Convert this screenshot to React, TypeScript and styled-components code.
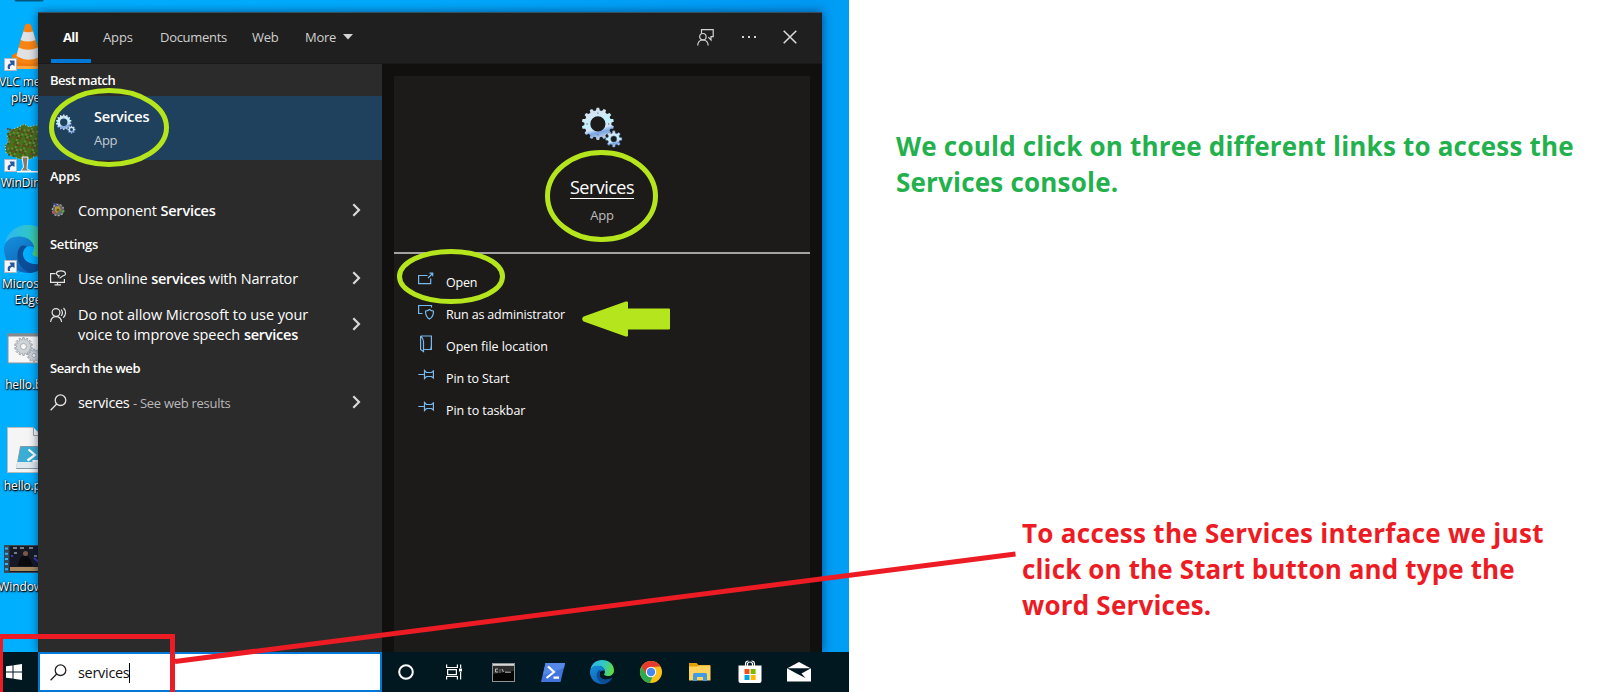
import React from "react";
import styled, { createGlobalStyle } from "styled-components";

const GlobalStyle = createGlobalStyle`
  * { box-sizing: border-box; }
  body { margin: 0; background: #fff; overflow: hidden; }
  #root { font-family: "Open Sans", "Noto Sans", sans-serif; }
`;

/* ---------- page ---------- */
const Page = styled.main`
  position: relative;
  display: flex;
  width: 1601px;
  height: 692px;
  overflow: hidden;
`;

const Desktop = styled.section`
  display: flex;
  flex-direction: column;
  width: 849px;
  height: 692px;
  background: linear-gradient(90deg, #00b0ff 0%, #00a8fb 50%, #0099f4 96%, #009ff5 100%);
`;

const Workspace = styled.div`
  display: flex;
  height: 652px;
`;

const IconColumn = styled.div`
  display: flex;
  flex-direction: column;
  width: 38px;
  height: 652px;
  padding-top: 22px;
  overflow: hidden;
`;

const Shortcut = styled.div`
  display: flex;
  flex-direction: column;
  align-items: center;
  flex: 0 0 101px;
  width: 76px;
  margin-left: -10px;
  svg { flex: none; }
`;

const ShortcutLabel = styled.div<{ $shift?: number }>`
  padding-left: ${(p) => p.$shift ?? 0}px;
  font-size: 12px;
  line-height: 15.5px;
  letter-spacing: -0.12px;
  text-align: center;
  white-space: nowrap;
  color: #fff;
  text-shadow: 1px 1px 1px #000, 0 1px 2px rgba(0, 0, 0, 0.9), 0 0 2px rgba(0, 0, 0, 0.6);
`;

/* ---------- search flyout ---------- */
const Flyout = styled.div`
  display: flex;
  flex-direction: column;
  width: 784px;
  height: 640px;
  margin-top: 12px;
  background: #11100e;
  box-shadow: 0 0 9px rgba(0, 20, 60, 0.6);
`;

const Header = styled.header`
  display: flex;
  align-items: stretch;
  justify-content: space-between;
  height: 52px;
  padding: 0 25px 0 13px;
  background: #1f1f1f;
  border-top: 1px solid #35505f;
  border-bottom: 1px solid #191919;
`;

const Tabs = styled.nav`
  display: flex;
`;

const Tab = styled.div<{ $active?: boolean; $width: number; $ls: number }>`
  display: flex;
  align-items: center;
  width: ${(p) => p.$width}px;
  padding: 0 0 2px 12px;
  font-size: 13px;
  font-weight: ${(p) => (p.$active ? 700 : 400)};
  letter-spacing: ${(p) => p.$ls}px;
  color: ${(p) => (p.$active ? "#fff" : "#cfcfcf")};
  box-shadow: ${(p) => (p.$active ? "inset 0 -4px #0078d7" : "none")};
  svg { margin-left: 7px; }
`;

const HeaderActions = styled.div`
  display: flex;
  align-items: center;
  gap: 26.5px;
  padding-bottom: 2px;
`;

const Body = styled.div`
  display: flex;
  height: 588px;
`;

const Results = styled.div`
  display: flex;
  flex-direction: column;
  width: 344px;
  background: #2b2b2b;
`;

const GroupTitle = styled.h2<{ $ls: number }>`
  margin: 0;
  height: 32px;
  padding-left: 12px;
  font-size: 13px;
  font-weight: 600;
  line-height: 32px;
  letter-spacing: ${(p) => p.$ls}px;
  color: #fff;
`;

const BestMatch = styled.div`
  display: flex;
  height: 64px;
  padding-left: 18px;
  background: #1f415d;
  svg { margin-top: 18px; }
`;

const BestMatchText = styled.div`
  display: flex;
  flex-direction: column;
  margin-left: 18px;
  padding-top: 9px;
`;

const BestName = styled.div`
  font-size: 14.5px;
  font-weight: 600;
  line-height: 24px;
  letter-spacing: -0.22px;
  color: #fff;
`;

const Kind = styled.div`
  font-size: 13px;
  line-height: 22px;
  letter-spacing: -0.3px;
  color: #c3ccd3;
`;

const ResultRow = styled.div<{ $h: number }>`
  display: flex;
  align-items: center;
  height: ${(p) => p.$h}px;
  padding: 0 21px 0 12px;
`;

const ResultIcon = styled.div<{ $lift?: number; $indent?: number }>`
  display: flex;
  width: 28px;
  padding-left: ${(p) => p.$indent ?? 0}px;
  padding-bottom: ${(p) => p.$lift ?? 0}px;
`;

const ResultText = styled.div<{ $ls: number }>`
  flex: 1;
  padding-top: 2px;
  font-size: 14.5px;
  line-height: 20px;
  letter-spacing: ${(p) => p.$ls}px;
  white-space: nowrap;
  color: #fff;
  b { font-weight: 600; letter-spacing: -0.25px; }
`;

const Hint = styled.span`
  font-size: 13px;
  letter-spacing: -0.28px;
  color: #b9b9b9;
`;

/* ---------- detail card ---------- */
const Detail = styled.div`
  width: 416px;
  margin: 12px 12px 0 12px;
  background: #1c1b19;
`;

const DetailHero = styled.div`
  display: flex;
  flex-direction: column;
  align-items: center;
  height: 178px;
  padding-top: 31px;
  border-bottom: 2px solid #a4a3a2;
`;

const DetailName = styled.div`
  height: 24px;
  margin-top: 27px;
  border-bottom: 1px solid #fff;
  font-size: 18px;
  line-height: 25px;
  letter-spacing: -0.52px;
  color: #fff;
`;

const DetailKind = styled.div`
  margin-top: 4px;
  font-size: 13px;
  line-height: 24px;
  letter-spacing: -0.15px;
  color: #bdbdbd;
`;

const Actions = styled.div`
  display: flex;
  flex-direction: column;
  padding: 12px 0 0 24px;
`;

const Action = styled.div<{ $ls: number }>`
  display: flex;
  height: 32px;
  font-size: 12.5px;
  line-height: 33px;
  letter-spacing: ${(p) => p.$ls}px;
  color: #fff;
  svg { margin: 5px 12px 0 0; }
`;

/* ---------- taskbar ---------- */
const Taskbar = styled.footer`
  display: flex;
  height: 40px;
  background: #011820;
`;

const StartButton = styled.div`
  display: flex;
  align-items: center;
  width: 38px;
  padding-left: 6px;
`;

const SearchBox = styled.div`
  display: flex;
  align-items: center;
  width: 344px;
  padding: 1px 0 0 10px;
  border: 2px solid #0078d7;
  background: #fff;
  font-size: 14.5px;
  letter-spacing: -0.3px;
  color: #111;
`;

const Query = styled.span`
  margin-left: 11px;
`;

const Caret = styled.span`
  width: 1px;
  height: 20px;
  background: #000;
`;

const TaskItems = styled.div`
  display: flex;
  margin-left: -1px;
`;

const TaskItem = styled.div`
  display: flex;
  align-items: center;
  justify-content: center;
  width: 49.15px;
`;

/* ---------- notes ---------- */
const Notes = styled.aside`
  display: flex;
  flex-direction: column;
  width: 752px;
`;

const Note = styled.p<{ $color: string; $top: number; $left: number }>`
  margin: ${(p) => p.$top}px 0 0 ${(p) => p.$left}px;
  font-size: 26px;
  font-weight: 700;
  line-height: 36px;
  white-space: nowrap;
  color: ${(p) => p.$color};
`;

const Line = styled.span<{ $ls: number }>`
  display: block;
  letter-spacing: ${(p) => p.$ls}px;
`;

const Markup = styled.svg`
  position: absolute;
  inset: 0;
  pointer-events: none;
`;

/* ---------- icons ---------- */
function gear(cx: number, cy: number, r: number, root: number, hole: number, teeth: number) {
  const step = (Math.PI * 2) / teeth;
  const at = (rad: number, a: number) => `${(cx + rad * Math.sin(a)).toFixed(2)} ${(cy - rad * Math.cos(a)).toFixed(2)}`;
  let d = "";
  for (let i = 0; i < teeth; i++) {
    const a = i * step;
    d += `${i ? "L" : "M"}${at(root, a - step * 0.32)}L${at(r, a - step * 0.18)}L${at(r, a + step * 0.18)}L${at(root, a + step * 0.32)}`;
  }
  return `${d}ZM${cx - hole} ${cy}a${hole} ${hole} 0 1 0 ${hole * 2} 0a${hole} ${hole} 0 1 0 ${-hole * 2} 0Z`;
}

const ServicesIcon = ({ size, id }: { size: number; id: string }) => (
  <svg width={size} height={size} viewBox="0 0 40 40">
    <defs>
      <linearGradient id={id} x1="0" y1="0" x2="0.25" y2="1">
        <stop offset="0" stopColor="#c9d6ea" />
        <stop offset="0.3" stopColor="#d5e6f5" />
        <stop offset="0.55" stopColor="#bdf3ff" />
        <stop offset="0.72" stopColor="#d3e6fa" />
        <stop offset="0.85" stopColor="#79a5e2" />
        <stop offset="1" stopColor="#b4cbe8" />
      </linearGradient>
    </defs>
    <path d={gear(15.5, 16.5, 15.7, 13.2, 7.4, 14)} fill={`url(#${id})`} fillRule="evenodd" />
    <g fill="#5d7487">
      <circle cx="15.500" cy="6" r=".7" /><circle cx="26" cy="16.500" r=".7" />
      <circle cx="5" cy="16.500" r=".7" /><circle cx="15.500" cy="27" r=".7" />
    </g>
    <path d={gear(31, 31.2, 8, 5.9, 3, 8)} fill={`url(#${id})`} stroke="#4c6f9f" strokeWidth=".5" fillRule="evenodd" />
  </svg>
);

const Chevron = () => (
  <svg width="9" height="14" viewBox="0 0 9 14" fill="none" stroke="#d8d8d8" strokeWidth="2.2">
    <path d="M1.300 1.300 7 7 1.300 12.700" />
  </svg>
);

const Magnifier = ({ color }: { color: string }) => (
  <svg width="17" height="17" viewBox="0 0 17 17" fill="none" stroke={color} strokeWidth="1.3">
    <circle cx="10.500" cy="6.200" r="5.300" />
    <path d="M6.700 10 .6 16.200" />
  </svg>
);

const ArrowBadge = ({ y }: { y: number }) => (
  <g transform={`translate(0 ${y})`}>
    <rect x=".5" y=".5" width="12" height="12" fill="#f4f7fa" stroke="#b0b6bc" />
    <path d="M4 11C3 7 4.500 5.500 7 5.500L5.500 2.500H10.500V8L8.500 6.800C6.500 7 5.500 8.500 6 11Z" fill="#27569f" />
  </g>
);

const VlcIcon = () => (
  <svg width="48" height="52" viewBox="0 0 48 52">
    <path d="M8 33 12 31H38L46 47H8Z" fill="#f07a0c" />
    <path d="M7 44H48V47H7Z" fill="#ffa63c" />
    <path d="M21 3Q24 0 27 3L38 38Q24 46 11 38Z" fill="#fb8310" />
    <path d="M19.500 9.500Q24 11 29 9.500L31.600 18Q24 21 16.500 18Z" fill="#dfe1e3" />
    <path d="M14.600 25.500Q24 30 33.800 25.500L36.500 34.500Q24 41 12.500 34Z" fill="#dfe1e3" />
    <ArrowBadge y={36} />
  </svg>
);

const treeDots = Array.from({ length: 150 }, (_, i) => ({
  x: 3 + ((i * 17.3) % 40),
  y: 5 + ((i * 7.7) % 28),
  c: ["#7d3a24", "#2d5a0e", "#6d8a4c", "#3c4f12", "#8f7a4f", "#356b0a"][i % 6],
}));

const TreeIcon = () => (
  <svg width="48" height="52" viewBox="0 0 48 52">
    <path d="M2 30 1 22 4 20 3 11 9 6 15 4 20 1 25 4 33 2 40 6 45 14 47 28 40 36 31 33 27 36 15 36Z" fill="#4b701d" stroke="#cfe3c4" strokeWidth="1" strokeDasharray="1 2" />
    {treeDots.map((d, i) => <rect key={i} x={d.x} y={d.y} width="1.800" height="1.800" fill={d.c} />)}
    <path d="M18 34H24L23 46 27 48H17L19.500 44Z" fill="#8b7768" stroke="#f4f4f4" />
    <path d="M13 48H46V49.500H13Z" fill="#fff" />
    <ArrowBadge y={36} />
  </svg>
);

const EdgeArt = ({ id }: { id: string }) => (
  <>
    <defs>
      <linearGradient id={`${id}a`} x1="0" y1=".3" x2="1" y2=".5">
        <stop offset="0" stopColor="#2fb6f0" /><stop offset=".5" stopColor="#2fc6c8" /><stop offset="1" stopColor="#63dc3f" />
      </linearGradient>
      <linearGradient id={`${id}b`} x1="0" y1="0" x2=".7" y2="1">
        <stop offset="0" stopColor="#1590dc" /><stop offset="1" stopColor="#0f5cb4" />
      </linearGradient>
    </defs>
    <path d="M1 20C2 8 12 0 24 0 38 0 48 9 48 21 48 28 43 32 36 32 30 32 27 30 29 27 32 22 28 13 18 12 10 11 4 14 1 20Z" fill={`url(#${id}a)`} />
    <path d="M0 24C0 16 7 11.500 15 11.500 24 11.500 30 17 30 23 28 20 20 20 19 28 18 38 31 43 44 36 40 44 32 48 24 48 10 48 0 37 0 24Z" fill={`url(#${id}b)`} />
    <path d="M17 21C10 28 13 43 26 47.900 34 47.500 41 42 44 36 31 43 18 38 19 28 19.300 25 21 22.500 23 21.500 21 20.500 19 20 17 21Z" fill="#0c4d97" />
  </>
);

const EdgeShortcutIcon = () => (
  <svg width="48" height="52" viewBox="0 0 48 52">
    <g transform="translate(0 1)"><EdgeArt id="desk" /></g>
    <ArrowBadge y={36} />
  </svg>
);

const BatchIcon = () => (
  <svg width="48" height="52" viewBox="0 0 48 52">
    <rect x="4" y="9" width="42" height="29" fill="#f7f7f7" stroke="#8e9398" />
    <rect x="3.500" y="8.500" width="43" height="3" fill="#85898d" />
    <path d={gear(19.5, 21.5, 9, 7, 3, 14)} fill="#cfd4d8" stroke="#8f979d" strokeWidth=".7" fillRule="evenodd" />
    <path d={gear(30, 30.5, 6.5, 4.8, 2, 10)} fill="#cfd4d8" stroke="#8f979d" strokeWidth=".7" fillRule="evenodd" />
  </svg>
);

const ScriptIcon = () => (
  <svg width="48" height="52" viewBox="0 0 48 52">
    <path d="M3.500 1.500H29L36 8.500V46.500H3.500Z" fill="#f5f5f5" stroke="#b7bcc0" />
    <path d="M29.500 1.500V9.500H37" fill="#fff" stroke="#9ca2a7" />
    <path d="M16.500 20.500H46L42 42.500H12.500Z" fill="#3aaed6" stroke="#8498a5" />
    <path d="M13 36H44L43 42H12Z" fill="#dfe9ee" />
    <path d="M24.500 23.500 31 29 23.500 34.500M28.500 35H36" stroke="#fff" strokeWidth="2.200" fill="none" />
  </svg>
);

const VideoIcon = () => (
  <svg width="48" height="52" viewBox="0 0 48 52">
    <rect x="0" y="18" width="48" height="28" fill="#34495a" />
    <path d="M2.500 20.500V46" stroke="#35b4f2" strokeWidth="3" strokeDasharray="2 3.200" />
    <rect x="5.500" y="19" width="42" height="26" fill="#171925" />
    <rect x="6" y="40" width="42" height="4" fill="#a98a60" />
    <path d="M9 21H13M16 21H20M25 21H29M10 26H13M30 29H33" stroke="#98a0ac" strokeWidth="1.500" />
    <path d="M14 39Q16 29 19 29T24 30 29 39Z" fill="#0b0b0d" />
    <circle cx="21.500" cy="26.500" r="2.500" fill="#7c5648" />
    <path d="M30 31 36 36M7 29H9" stroke="#3c38b0" strokeWidth="2" />
  </svg>
);

const FeedbackIcon = () => (
  <svg width="17" height="17" viewBox="0 0 17 17" fill="none" stroke="#d4d4d4" strokeWidth="1.200">
    <path d="M4.500 4.500V.7H16.200V7.600H14V11L11.300 8.200" />
    <circle cx="5.900" cy="7.700" r="3.200" />
    <path d="M.7 16.500C.9 13 3 11 5.900 11S11 13 11.200 16.500" />
  </svg>
);

const ComponentIcon = () => (
  <svg width="14" height="14" viewBox="0 0 14 14">
    <circle cx="7" cy="7" r="5.700" fill="#66696a" stroke="#a3a6ad" strokeDasharray="2 1.500" strokeWidth="1.300" />
    <path d="M4 4 8 3 10 7 6 10 4 8Z" fill="#b29b32" />
    <path d="M2 1H6M4 2.500H7" stroke="#5553ad" />
    <circle cx="7" cy="7" r="1.500" fill="#675310" />
    <circle cx="2.500" cy="9.500" r="1.200" fill="#c7474f" /><circle cx="12" cy="8.500" r="1.300" fill="#4f9f45" />
  </svg>
);

const NarratorIcon = () => (
  <svg width="17" height="16" viewBox="0 0 17 16" fill="none" stroke="#e4e4e4" strokeWidth="1.200">
    <path d="M5.500 3.600H.6V12.400H14.400V9M7.500 12.400V14.800M4.500 14.900H11" />
    <path d="M8 7.500 9.200 5.900C4.600 4.400 6 .8 11 .8S17.300 5.400 12.600 6L9.500 8.400" />
  </svg>
);

const VoiceIcon = () => (
  <svg width="17" height="16" viewBox="0 0 17 16" fill="none" stroke="#e4e4e4" strokeWidth="1.200">
    <circle cx="6" cy="5.500" r="3.900" />
    <path d="M.6 15C1 11.500 3 9.600 6 9.600S11.200 11.500 11.600 15M11.200 2.500C12.700 4.500 12.700 7 11.200 9M13.500 1C16.500 4 16 8 13.200 10.700" />
  </svg>
);

const ActionSvg = styled.svg.attrs({ width: 16, height: 18, viewBox: "0 0 16 18", fill: "none", stroke: "#76b9ed", strokeWidth: 1.2 })``;

const pin = <path d="M.3 7.500H6.500M6.500 3.500V11.500L8.500 9.500H13.500L15.400 11V4L13.500 5.500H8.500Z" />;

const actions = [
  { label: "Open", ls: -0.19, art: <path d="M9.500 4.500H.6V12.600H12.700V7.500M10 7 14.500 2.500M11.500 2.100H14.700V5.300" /> },
  { label: "Run as administrator", ls: -0.16, art: <path d="M4.500 10.500H.6V2.500H13.500V4.500M11.500 6.500C10 7.700 8.700 8 7.600 8 7.300 12 8.500 14.200 11.500 16.100 14.500 14.200 15.700 12 15.400 8 14.300 8 13 7.700 11.500 6.500Z" /> },
  { label: "Open file location", ls: -0.04, art: <path d="M2.600 1H13.400V14.500H6.200M2.600 1V14.500L5.500 16.500V6.500C5.500 4 4.300 2.500 2.600 1M13.400 10.500 12.800 14" /> },
  { label: "Pin to Start", ls: -0.1, art: pin },
  { label: "Pin to taskbar", ls: -0.08, art: pin },
];

const shortcuts = [
  { icon: <VlcIcon />, label: <>VLC media<br />player</> },
  { icon: <TreeIcon />, label: "WinDirStat", shift: 4 },
  { icon: <EdgeShortcutIcon />, label: <>Microsoft<br />Edge</> },
  { icon: <BatchIcon />, label: "hello.bat", shift: 2 },
  { icon: <ScriptIcon />, label: "hello.ps1", shift: 1 },
  { icon: <VideoIcon />, label: "Windows..." },
];

const taskIcons = [
  <svg width="18" height="18"><circle cx="9" cy="9" r="6.800" fill="none" stroke="#fff" strokeWidth="2" /></svg>,
  <svg width="17" height="16" fill="none" stroke="#fff" strokeWidth="1.200">
    <path d="M.6.500V3.500H11.400V.5M.6 15.500V12.500H11.400V15.500M1.600 5.600H10.400V10.600H1.600ZM14.600.500V4M14.600 8V15.500" />
    <path d="M13 4.500H16V7.500H13Z" fill="#fff" stroke="none" />
  </svg>,
  <svg width="23" height="19">
    <rect width="23" height="19" fill="#8e9294" /><rect x="1" y="3" width="21" height="15" fill="#050505" />
    <rect x="1" y="1" width="21" height="1.500" fill="#d7d7d7" /><path d="M1 11 22 8V3H1Z" fill="#2c2c2c" />
    <path d="M6 6H3.500V9H6M8 6.500V7.500M8 8.500V9.500M10 6 11.500 9M13 9.200H19" stroke="#bcbcbc" fill="none" />
  </svg>,
  <svg width="24" height="19">
    <path d="M4.500 0H24L19.500 19H0Z" fill="#4175dc" /><path d="M4.500 0H24L23 5 2 12Z" fill="#5589e8" />
    <path d="M7 3.500 13 9 5.500 15M12.500 14.600H18" stroke="#fff" strokeWidth="2.200" fill="none" />
  </svg>,
  <svg width="24" height="24" viewBox="0 0 48 48"><EdgeArt id="bar" /></svg>,
  <svg width="22" height="22" viewBox="0 0 22 22">
    <circle cx="11" cy="11" r="11" fill="#fbc116" />
    <path d="M1.500 5.500A11 11 0 0 1 20.500 5.500L11 6 6.200 13.800Z" fill="#e33b2e" />
    <path d="M1.500 5.500 6.300 13.700C8 16 10 16.500 12.500 15.800L10 22A11 11 0 0 1 1.500 5.500Z" fill="#2da94f" />
    <circle cx="11" cy="11" r="5.200" fill="#fff" /><circle cx="11" cy="11" r="4.200" fill="#4688f1" />
  </svg>,
  <svg width="22" height="18">
    <path d="M0 0H7.500L9.500 2H21V6H0Z" fill="#e3a100" /><path d="M0 3.500H8L10 2.500H21.500V17.500H0Z" fill="#ffd35c" />
    <path d="M4 18V11.500Q4 10 5.500 10H16.500Q18 10 18 11.500V18H14V14H8V18Z" fill="#3f9ce0" />
  </svg>,
  <svg width="24" height="24" viewBox="0 0 24 24">
    <path d="M7.500 6V4Q7.500 1 10.500 1M16.500 6V4Q16.500 1 13.500 1M9.500 6V3.500Q12 .5 14.500 3.500V6" fill="none" stroke="#fff" strokeWidth="1.200" />
    <path d="M.5 5.500H23.500V21Q23.500 23 21.500 23H2.500Q.5 23 .5 21Z" fill="#fff" />
    <path d="M6.500 9H11.500V14H6.500Z" fill="#f25022" /><path d="M12.600 9H17.600V14H12.600Z" fill="#7fba00" />
    <path d="M6.500 15H11.500V20H6.500Z" fill="#00a4ef" /><path d="M12.600 15H17.600V20H12.600Z" fill="#ffb900" />
  </svg>,
  <svg width="24" height="20"><path d="M0 6.500 12 0 24 6.500V19.500H0Z" fill="#fff" /><path d="M0 6.300H24L14.500 11.500 18.500 16 10 11.700Z" fill="#011820" /></svg>,
];

export default function App() {
  return (
    <>
      <GlobalStyle />
      <Page>
        <Desktop>
          <Workspace>
            <IconColumn>
              {shortcuts.map((s, i) => (
                <Shortcut key={i}>
                  {s.icon}
                  <ShortcutLabel $shift={s.shift}>{s.label}</ShortcutLabel>
                </Shortcut>
              ))}
            </IconColumn>
            <Flyout>
              <Header>
                <Tabs>
                  <Tab $active $width={40} $ls={-0.6}>All</Tab>
                  <Tab $width={57} $ls={-0.1}>Apps</Tab>
                  <Tab $width={92} $ls={-0.3}>Documents</Tab>
                  <Tab $width={53} $ls={-0.25}>Web</Tab>
                  <Tab $width={70} $ls={-0.3}>
                    More
                    <svg width="10" height="6"><path d="M0 0H10L5 5.500Z" fill="#d4d4d4" /></svg>
                  </Tab>
                </Tabs>
                <HeaderActions>
                  <FeedbackIcon />
                  <svg width="16" height="4" fill="#d4d4d4"><path d="M1 1H3V3H1ZM7 1H9V3H7ZM13 1H15V3H13Z" /></svg>
                  <svg width="14" height="14" stroke="#dcdcdc" strokeWidth="1.500"><path d="M.7.700 13.300 13.300M13.300.7.7 13.300" /></svg>
                </HeaderActions>
              </Header>
              <Body>
                <Results>
                  <GroupTitle $ls={-0.56}>Best match</GroupTitle>
                  <BestMatch>
                    <ServicesIcon size={20} id="gearSmall" />
                    <BestMatchText>
                      <BestName>Services</BestName>
                      <Kind>App</Kind>
                    </BestMatchText>
                  </BestMatch>
                  <GroupTitle $ls={-0.28}>Apps</GroupTitle>
                  <ResultRow $h={36}>
                    <ResultIcon $indent={1}><ComponentIcon /></ResultIcon>
                    <ResultText $ls={-0.12}>Component <b>Services</b></ResultText>
                    <Chevron />
                  </ResultRow>
                  <GroupTitle $ls={-0.29}>Settings</GroupTitle>
                  <ResultRow $h={36}>
                    <ResultIcon><NarratorIcon /></ResultIcon>
                    <ResultText $ls={-0.18}>Use online <b>services</b> with Narrator</ResultText>
                    <Chevron />
                  </ResultRow>
                  <ResultRow $h={56}>
                    <ResultIcon $lift={18}><VoiceIcon /></ResultIcon>
                    <ResultText $ls={-0.07}>
                      Do not allow Microsoft to use your<br />voice to improve speech <b>services</b>
                    </ResultText>
                    <Chevron />
                  </ResultRow>
                  <GroupTitle $ls={-0.45}>Search the web</GroupTitle>
                  <ResultRow $h={36}>
                    <ResultIcon><Magnifier color="#e4e4e4" /></ResultIcon>
                    <ResultText $ls={-0.3}>services <Hint>- See web results</Hint></ResultText>
                    <Chevron />
                  </ResultRow>
                </Results>
                <Detail>
                  <DetailHero>
                    <ServicesIcon size={41} id="gearLarge" />
                    <DetailName>Services</DetailName>
                    <DetailKind>App</DetailKind>
                  </DetailHero>
                  <Actions>
                    {actions.map((a) => (
                      <Action key={a.label} $ls={a.ls}>
                        <ActionSvg>{a.art}</ActionSvg>
                        {a.label}
                      </Action>
                    ))}
                  </Actions>
                </Detail>
              </Body>
            </Flyout>
          </Workspace>
          <Taskbar>
            <StartButton>
              <svg width="16" height="16" fill="#fff">
                <path d="M0 2.300 6.500 1.400V7.500H0ZM7.500 1.200 16 0V7.500H7.500ZM0 8.500H6.500V14.600L0 13.700ZM7.500 8.500H16V16L7.500 14.800Z" />
              </svg>
            </StartButton>
            <SearchBox>
              <Magnifier color="#222" />
              <Query>services</Query>
              <Caret />
            </SearchBox>
            <TaskItems>
              {taskIcons.map((icon, i) => <TaskItem key={i}>{icon}</TaskItem>)}
            </TaskItems>
          </Taskbar>
        </Desktop>
        <Notes>
          <Note $color="#22b14c" $top={128} $left={47}>
            <Line $ls={0.2}>We could click on three different links to access the</Line>
            <Line $ls={0.2}>Services console.</Line>
          </Note>
          <Note $color="#ed1c24" $top={315} $left={173}>
            <Line $ls={0.3}>To access the Services interface we just</Line>
            <Line $ls={0.14}>click on the Start button and type the</Line>
            <Line $ls={0.2}>word Services.</Line>
          </Note>
        </Notes>
        <Markup width="1601" height="692" fill="none">
          <path d="M16 0H42" stroke="#04405c" strokeWidth="3" strokeLinecap="round" opacity=".8" />
          <g stroke="#b5e61d" strokeWidth="5">
            <ellipse cx="109" cy="127.500" rx="57.500" ry="37" />
            <ellipse cx="601.500" cy="196" rx="54" ry="43.500" />
            <ellipse cx="451" cy="276.500" rx="51.500" ry="25" />
          </g>
          <path d="M584 317.500 626 302.500H627V309.500H669V328.500H627V335.500H626L584 320.500Q582.500 319 584 317.500Z" fill="#b5e61d" stroke="#b5e61d" strokeWidth="2" strokeLinejoin="round" />
          <path d="M.5 700V636.500H172.500V700M175 661.500 1015.500 554" stroke="#ed1c24" strokeWidth="5" />
        </Markup>
      </Page>
    </>
  );
}
